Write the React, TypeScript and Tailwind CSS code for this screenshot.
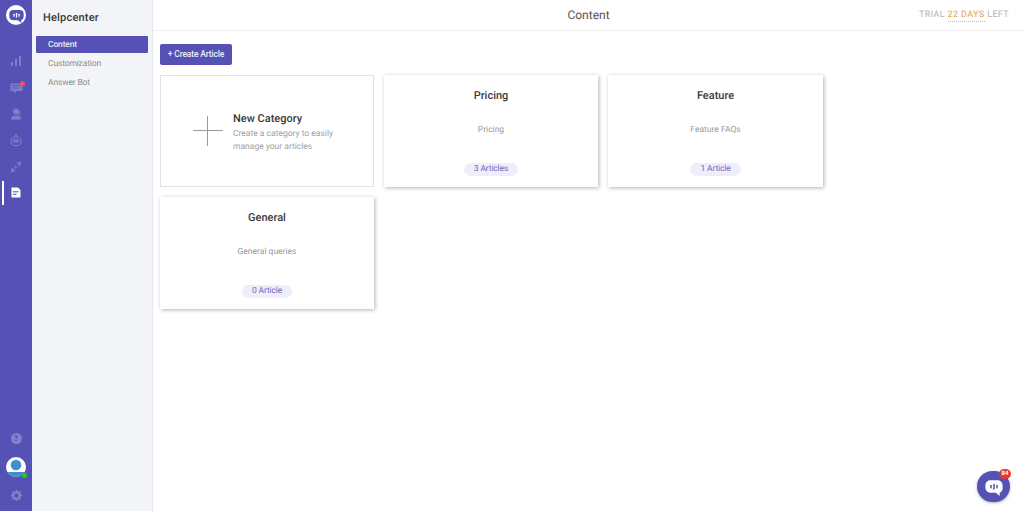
import React from "react";

const categories = [
  { title: "Pricing", desc: "Pricing", count: "3 Articles" },
  { title: "Feature", desc: "Feature FAQs", count: "1 Article" },
  { title: "General", desc: "General queries", count: "0 Article" },
];

const ChatBubble = ({ bg, bars }: { bg: string; bars: string }) => (
  <svg viewBox="0 0 24 24" className="w-full h-full">
    <path
      d="M7 3h10a6.5 6.5 0 0 1 6.5 6.5v4a6.5 6.5 0 0 1-4 6V24l-5-4.5H7A6.5 6.5 0 0 1 .5 13V9.5A6.5 6.5 0 0 1 7 3z"
      fill={bg}
    />
    <rect x="7" y="9" width="2" height="5" rx="1" fill={bars} />
    <rect x="11" y="7.5" width="2" height="8" rx="1" fill={bars} />
    <rect x="15" y="9" width="2" height="5" rx="1" fill={bars} />
  </svg>
);

const RailIcon = ({ children }: { children: React.ReactNode }) => (
  <div className="relative h-[26.5px] w-full flex items-center justify-center text-[#7f7cc9]">{children}</div>
);

const Rail = () => (
  <aside className="w-8 h-full shrink-0 bg-[#5551b5] flex flex-col items-center">
    <div className="mt-[5px] w-5 h-5 rounded-full bg-white flex items-center justify-center">
      <div className="w-[15px] h-[15px]">
        <ChatBubble bg="#5551b5" bars="#ffffff" />
      </div>
    </div>

    <div className="mt-[23px] w-full">
      <RailIcon>
        <svg viewBox="0 0 12 12" className="w-3 h-3" fill="currentColor">
          <rect x="1" y="7" width="2" height="4" />
          <rect x="5" y="4" width="2" height="7" />
          <rect x="9" y="1" width="2" height="10" />
        </svg>
      </RailIcon>
      <RailIcon>
        <div className="relative w-[13px] h-[12px]">
          <svg viewBox="0 0 13 12" className="w-full h-full">
            <path d="M0.5 1.5h12v7.5H6.5l-2.5 2.5V9H0.5z" fill="currentColor" />
            <rect x="2.5" y="3.2" width="8" height="0.9" fill="#5551b5" />
            <rect x="2.5" y="5.6" width="5" height="0.9" fill="#5551b5" />
          </svg>
          <span className="absolute -top-[1px] -right-[2px] w-[5px] h-[5px] rounded-full bg-[#f0525f]" />
        </div>
      </RailIcon>
      <RailIcon>
        <svg viewBox="0 0 12 12" className="w-3 h-3" fill="currentColor">
          <circle cx="6" cy="3.6" r="3" />
          <path d="M1 11.5c0-2.8 1.6-4 5-4s5 1.2 5 4z" />
          <rect x="8" y="2.5" width="2.5" height="5" opacity="0.6" />
        </svg>
      </RailIcon>
      <RailIcon>
        <svg viewBox="0 0 12 13" className="w-3 h-[13px]">
          <circle cx="6" cy="1" r="1" fill="currentColor" />
          <rect x="5.5" y="1" width="1" height="2" fill="currentColor" />
          <rect x="1" y="3" width="10" height="8.5" rx="4" fill="none" stroke="currentColor" strokeWidth="1.2" />
          <rect x="2.8" y="5.2" width="6.4" height="3.6" rx="1.8" fill="currentColor" />
          <circle cx="4.6" cy="7" r="0.6" fill="#5551b5" />
          <circle cx="7.4" cy="7" r="0.6" fill="#5551b5" />
        </svg>
      </RailIcon>
      <RailIcon>
        <svg viewBox="0 0 12 12" className="w-3 h-3" fill="currentColor">
          <path d="M6.5 2l3.5 3.5L11.5 0.5z" />
          <path d="M5.5 10L2 6.5 0.5 11.5z" />
          <path d="M3.8 6l2-2 2 2-2 2z" opacity="0.7" />
        </svg>
      </RailIcon>
    </div>

    <div className="relative w-full h-6 flex items-center justify-center">
      <span className="absolute left-0.5 top-0 w-[2px] h-full bg-white" />
      <svg viewBox="0 0 10 11" className="w-[10px] h-[11px]">
        <path d="M0.5 0.5h6.5l2.5 2.5v7.5h-9z" fill="#ffffff" />
        <rect x="2" y="4.3" width="5.5" height="1" fill="#5551b5" />
        <rect x="2" y="6.8" width="3.5" height="1" fill="#5551b5" />
      </svg>
    </div>

    <div className="mt-auto flex flex-col items-center">
      <div className="w-[11px] h-[11px] rounded-full bg-[#8481cc] flex items-center justify-center text-[8px] leading-none font-bold text-[#5551b5]">
        ?
      </div>
      <div className="relative mt-[13px] w-5 h-5 rounded-full bg-white">
        <svg viewBox="0 0 20 20" className="w-full h-full">
          <clipPath id="avatar-clip">
            <circle cx="10" cy="10" r="10" />
          </clipPath>
          <g clipPath="url(#avatar-clip)">
            <rect x="2" y="15" width="16" height="5" fill="#3d8fd1" />
            <circle cx="10" cy="8" r="5.3" fill="#3d8fd1" />
          </g>
        </svg>
        <span className="absolute right-[-1px] bottom-[-1px] w-[5px] h-[5px] rounded-full bg-[#1fd01f]" />
      </div>
      <div className="mt-[13px] mb-[10px] w-[11px] h-[11px] text-[#8481cc]">
        <svg viewBox="0 0 16 16" className="w-full h-full">
          <circle cx="8" cy="8" r="4.6" fill="none" stroke="currentColor" strokeWidth="3" />
          <g stroke="currentColor" strokeWidth="2.6">
            <path d="M8 0v3M8 13v3M0 8h3M13 8h3M2.3 2.3l2.1 2.1M11.6 11.6l2.1 2.1M13.7 2.3l-2.1 2.1M4.4 11.6l-2.1 2.1" />
          </g>
        </svg>
      </div>
    </div>
  </aside>
);

const SubNav = () => (
  <nav className="w-[121px] h-full shrink-0 bg-[#f3f4f7] border-r border-[#e6e7ee] px-1">
    <h2 className="pl-[7px] pt-[10px] h-[36px] text-[11px] leading-[15px] font-medium text-[#3a3a3a] tracking-[0.2px]">
      Helpcenter
    </h2>
    <a className="block h-[17px] w-[112px] rounded-[1px] bg-[#5551b5] pl-[12px] text-[8.5px] tracking-[-0.15px] leading-[18px] font-medium text-[#e9e8f6]">
      Content
    </a>
    <a className="block mt-[2px] h-[17px] pl-[12px] text-[8.5px] tracking-[-0.15px] leading-[18px] text-[#8d8d8d]">
      Customization
    </a>
    <a className="block mt-[2px] h-[17px] pl-[12px] text-[8.5px] tracking-[-0.15px] leading-[18px] text-[#8d8d8d]">
      Answer Bot
    </a>
  </nav>
);

const CategoryCard = ({ title, desc, count }: { title: string; desc: string; count: string }) => (
  <div className="h-[112px] bg-white shadow-[1px_1px_4px_rgba(0,0,0,0.3)] flex flex-col items-center pt-[13px]">
    <div className="text-[11px] leading-[16px] font-medium text-[#3b3b3b]">{title}</div>
    <div className="mt-[20px] text-[8.5px] leading-[12px] text-[#9a9a9a]">{desc}</div>
    <div className="mt-[27px] h-[13px] px-[10px] rounded-full bg-[#eeedf9] text-center text-[8.5px] tracking-[-0.15px] leading-[13px] text-[#6f6bc4] whitespace-nowrap">
      {count}
    </div>
  </div>
);

export default function App() {
  return (
    <div
      className="relative flex w-[1024px] h-[511px] overflow-hidden bg-white antialiased [text-rendering:geometricPrecision]"
      style={{ fontFamily: "Roboto, 'Liberation Sans', sans-serif" }}
    >
      <Rail />
      <SubNav />
      <div className="flex-1 min-w-0">
        <header className="relative h-[31px] border-b border-[#eeeeee] flex items-center justify-center">
          <span className="text-[12px] text-[#555555]">Content</span>
          <span className="absolute right-[15px] top-[9px] text-[9px] leading-[12px] tracking-[0.35px] text-[#b3b3b3]">
            TRIAL{" "}
            <span className="font-medium text-[#e8b462] border-b border-dotted border-[#e8b462] pb-[1px]">22 DAYS</span>{" "}
            LEFT
          </span>
        </header>
        <main className="pl-[7px] pt-[13px]">
          <button className="block h-[21px] w-[72px] rounded-[2px] bg-[#5551b5] text-[8.5px] tracking-[-0.15px] font-medium text-[#eeeef8]">
            + Create Article
          </button>
          <div className="mt-[10px] grid grid-cols-[214px_214px_215px] gap-x-[10px] gap-y-[10px]">
            <div className="h-[112px] border border-[#e2e2e2] bg-white flex items-center pl-[32px]">
              <div className="relative w-[30px] h-[30px] shrink-0">
                <span className="absolute left-0 top-[14px] w-full h-px bg-[#9a9a9a]" />
                <span className="absolute top-0 left-[14px] h-full w-px bg-[#9a9a9a]" />
              </div>
              <div className="ml-[10px] pt-[3px]">
                <div className="text-[11px] leading-[15px] font-medium text-[#3b3b3b]">New Category</div>
                <div className="mt-[2px] text-[8.5px] leading-[13px] text-[#a0a0a0]">
                  Create a category to easily
                  <br />
                  manage your articles
                </div>
              </div>
            </div>
            {categories.map((c) => (
              <CategoryCard key={c.title} {...c} />
            ))}
          </div>
        </main>
      </div>

      <div className="absolute left-[977px] top-[471px] w-[33px] h-[31px] rounded-full bg-[#5551b5] shadow-[0_1px_3px_rgba(0,0,0,0.3)] flex items-center justify-center">
        <div className="w-[18px] h-[18px]">
          <ChatBubble bg="#ffffff" bars="#5551b5" />
        </div>
        <span className="absolute -top-[2px] -right-[1px] w-3 h-[10px] rounded-full bg-[#e53935] text-white text-[6px] leading-[10px] font-bold text-center">
          84
        </span>
      </div>
    </div>
  );
}
